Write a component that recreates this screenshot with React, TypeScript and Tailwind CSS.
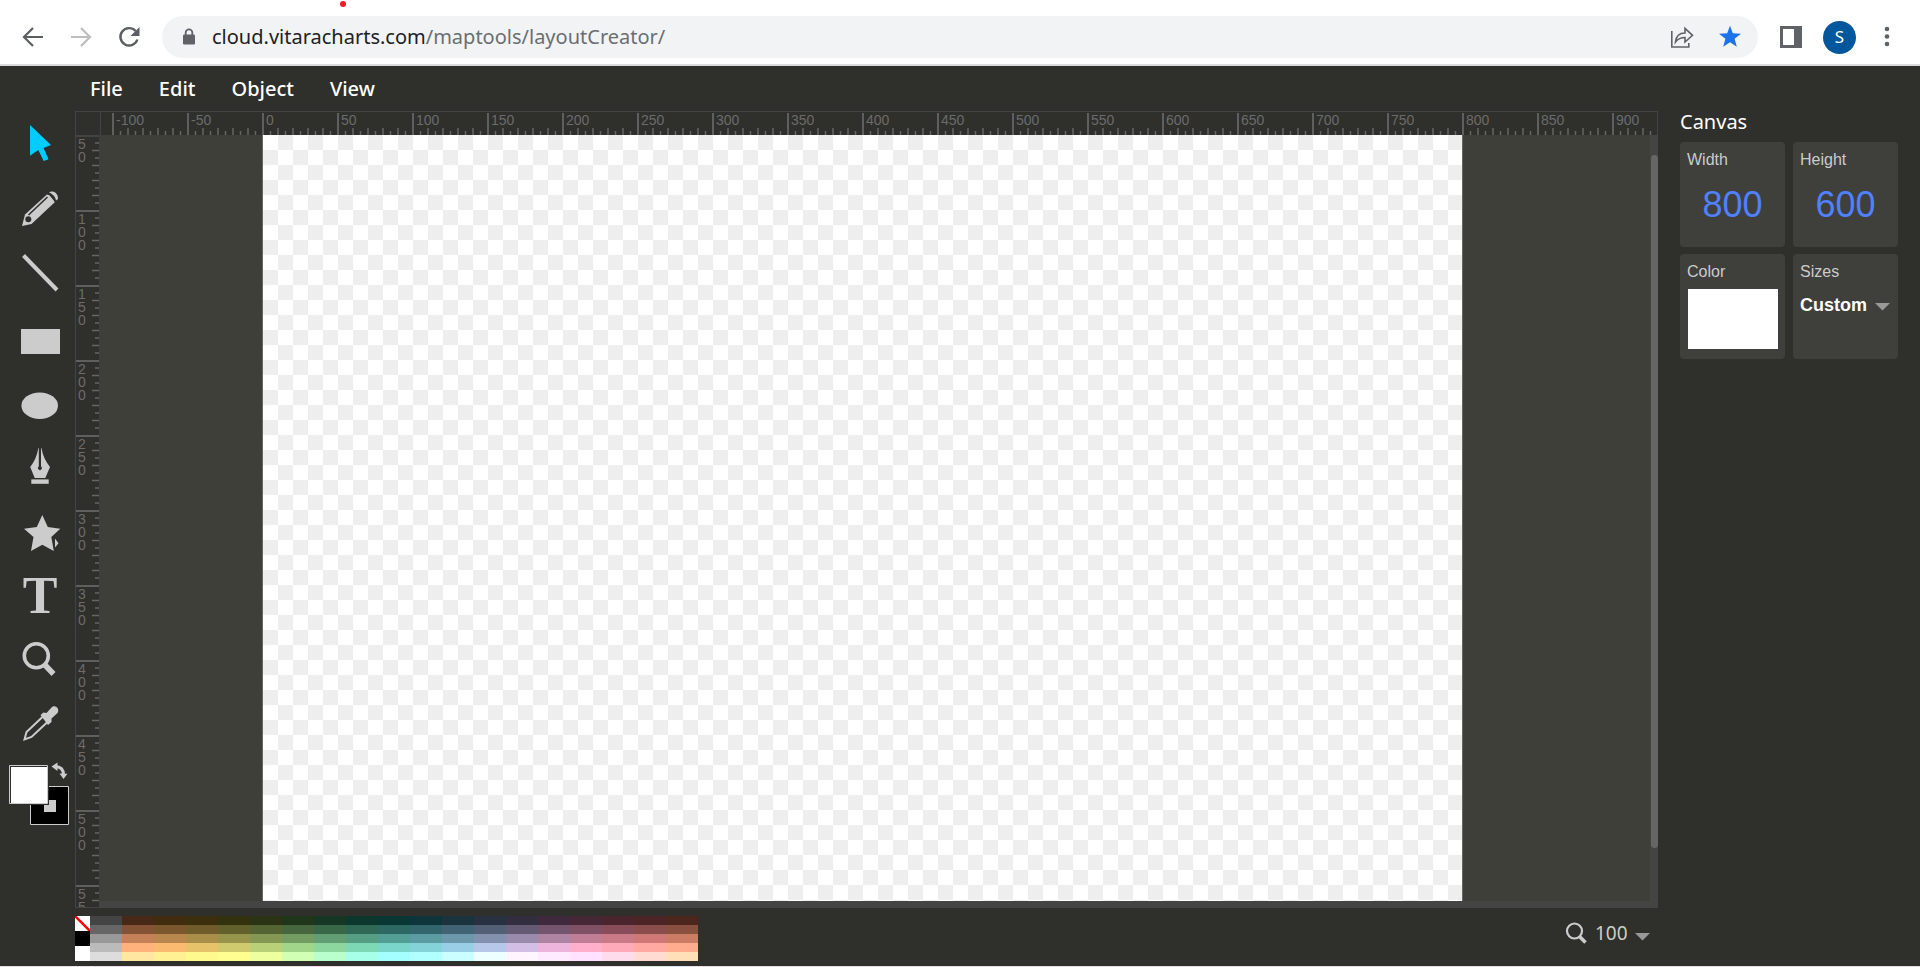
import type { ReactNode } from "react";

const UI_FONT = "font-['Noto_Sans','Open_Sans',sans-serif]";
const LABEL_FONT = "font-['Liberation_Sans',Arial,sans-serif]";

const PALETTE = [
  ["#444444", "#482816", "#422c10", "#3b2f0e", "#32320f", "#2a3414", "#1f361b", "#153723", "#0c372c", "#083734", "#0e353b", "#1a333f", "#273141", "#332d40", "#3e2a3c", "#462735", "#4b252d", "#4d2425", "#4c261d"],
  ["#666666", "#845335", "#7b572d", "#6f5c2a", "#62612c", "#546433", "#46673d", "#396849", "#306856", "#2d6862", "#33666c", "#426373", "#535f75", "#645a73", "#74556d", "#805064", "#884d58", "#8b4d4b", "#894f3f"],
  ["#999999", "#c48157", "#b8874d", "#a98e49", "#97944b", "#849854", "#729c62", "#619e73", "#559e84", "#529d94", "#5b9ba2", "#6d97ab", "#8391ae", "#9a8aab", "#af84a3", "#bf7e96", "#c97a86", "#ce7975", "#cc7c65"],
  ["#bbbbbb", "#ffb27c", "#faba6f", "#e6c36a", "#cfca6d", "#b8d078", "#a0d58a", "#8cd79f", "#7dd8b5", "#7ad6ca", "#84d3d9", "#9acee6", "#b6c7ea", "#d3bee6", "#edb5dc", "#ffaecc", "#ffaab8", "#ffa9a2", "#ffab8d"],
  ["#dddddd", "#ffe7a2", "#fff093", "#fffa8d", "#ffff91", "#eeff9f", "#d1ffb4", "#b9ffce", "#a8ffe9", "#a4ffff", "#b1ffff", "#cbffff", "#edffff", "#fff5ff", "#ffebff", "#ffe2ff", "#ffdcec", "#ffdbd2", "#ffdfb8"],
];

const COLUMN_MARKS = Array.from({ length: 21 }, (_, i) => (i - 2) * 50);
const ROW_MARKS = Array.from({ length: 11 }, (_, i) => (i + 1) * 50);

function BrowserBar() {
  return (
    <header className="flex h-[66px] shrink-0 items-center border-b-2 border-[#dadbdd] bg-white pt-[10px] pr-[21px] pl-[21px]">
      <nav className="flex w-[141px] shrink-0 items-center gap-6 text-[#5b5e63]">
        <button aria-label="Back">
          <svg width="24" height="24" viewBox="0 0 24 24" fill="none" stroke="currentColor" strokeWidth="2.2">
            <path d="M22 12H3.500M12 3 3 12l9 9" />
          </svg>
        </button>
        <button aria-label="Forward" className="text-[#bdbec1]">
          <svg width="24" height="24" viewBox="0 0 24 24" fill="none" stroke="currentColor" strokeWidth="2.2">
            <path d="M2 12h18.500M12 3l9 9-9 9" />
          </svg>
        </button>
        <button aria-label="Reload">
          <svg width="24" height="24" viewBox="0 0 24 24" fill="none" stroke="currentColor" strokeWidth="2.4">
            <path d="M20.4 14.5A8.7 8.7 0 1 1 18.6 6" />
            <path d="M22.5 2v9h-9z" fill="currentColor" stroke="none" />
          </svg>
        </button>
      </nav>
      <div className="flex h-[42px] min-w-0 flex-1 items-center rounded-full bg-[#f1f3f4] pr-4 pl-5">
        <svg width="14" height="18" viewBox="0 0 14 18" className="shrink-0">
          <rect x="1" y="6.5" width="12" height="10" rx="1.3" fill="#5f6368" />
          <path d="M3.7 7V4.6a3.3 3.3 0 0 1 6.6 0V7" fill="none" stroke="#5f6368" strokeWidth="1.8" />
        </svg>
        <a href="#address" className={`ml-4 min-w-0 flex-1 truncate text-[20px] text-[#6b6e72] ${UI_FONT}`}>
          <span className="text-[#202124]">cloud.vitaracharts.com</span>/maptools/layoutCreator/
        </a>
        <button aria-label="Share" className="mr-6">
          <svg width="24" height="24" viewBox="0 0 24 24" fill="none" stroke="#5f6368" strokeWidth="1.6">
            <path d="M1.8 6v16h17v-4" />
            <path d="M5.5 17c.6-6.500 4-9 9.500-9V3.300l7.500 7-7.500 6.700v-4.500c-4.500 0-7 1.200-9.500 4.500z" />
          </svg>
        </button>
        <button aria-label="Bookmark">
          <svg width="24" height="24" viewBox="0 0 24 24" fill="#1a73e8">
            <path d="m12 .7 2.800 7.600 8.200.4-6.400 5.100 2.200 7.900L12 17.200l-6.800 4.500 2.200-7.900L1 8.700l8.200-.4z" />
          </svg>
        </button>
      </div>
      <button aria-label="Side panel" className="ml-[22px]">
        <svg width="22" height="22" viewBox="0 0 22 22">
          <path fill="#5f6368" fillRule="evenodd" d="M0 0h22v22H0zM3 3v16h11V3z" />
        </svg>
      </button>
      <button className={`ml-[21px] h-[33px] w-[33px] rounded-full bg-[#01579b] text-[17px] text-white ${UI_FONT}`}>S</button>
      <button aria-label="More" className="ml-[19px]">
        <svg width="24" height="24" viewBox="0 0 24 24" fill="#5f6368">
          <circle cx="12" cy="4" r="2.300" />
          <circle cx="12" cy="11.500" r="2.300" />
          <circle cx="12" cy="19" r="2.300" />
        </svg>
      </button>
    </header>
  );
}

function Tool({ label, children }: { label: string; children: ReactNode }) {
  return (
    <button aria-label={label} className="block h-16 w-full text-[#cccccc]">
      <svg width="75" height="64" viewBox="0 0 75 64" fill="currentColor">
        {children}
      </svg>
    </button>
  );
}

function Toolbox() {
  return (
    <aside className="flex w-[75px] shrink-0 flex-col pt-px">
      <Tool label="Select">
        <path fill="#00ccff" d="M30 13v30.700l8.300-5.700 5.400 11 4.800-1.700-5-11.300 7.500-3z" />
      </Tool>
      <Tool label="Pencil">
        <path d="M22 50 25 38.500 48 17.500l7 8.500L31.500 48z" />
        <path d="m28.500 39 19-18" stroke="#2f302b" strokeWidth="1.600" fill="none" />
        <circle cx="28.300" cy="43.300" r="3" fill="#2f302b" />
        <path d="M47 17.500c4 .5 8 4 8.500 8.500" stroke="#2f302b" strokeWidth="1.800" fill="none" />
        <path d="M49 16.500c3-2.500 9.500 0 9 6.500l-2 1.500c-.6-4-3.500-6.500-7-8z" />
      </Tool>
      <Tool label="Line">
        <path d="m23.500 15.500 33.500 34.500" stroke="currentColor" strokeWidth="4" />
      </Tool>
      <Tool label="Rectangle">
        <path d="M21 25h39v25H21z" />
      </Tool>
      <Tool label="Ellipse">
        <ellipse cx="39.700" cy="37.700" rx="18.300" ry="13.300" />
      </Tool>
      <Tool label="Path">
        <path d="M38.800 16v18.300a2 2 0 1 0 2.200 0V16h.4c1.500 8 4.600 14 8.600 19l-4.700 11H34.700L30.200 35c4-5 6.700-11 8.200-19z" />
        <path d="M31.300 47.400h17.400v4.400H31.300z" />
      </Tool>
      <Tool label="Shape library">
        <path d="m42.300 19 5.500 12 12.500 1.800-9 8.200 2.500 14-11.500-6.300L31 55l2.500-14-9.500-8.200L36.800 31z" />
        <path d="m55 42.500 3.500 4.700-3.500 4.300z" stroke="#2f302b" strokeWidth="2" paintOrder="stroke" />
      </Tool>
      <button aria-label="Text" className="h-16 w-full pt-2 pl-[5px] text-center font-['Liberation_Serif',serif] text-[52px] leading-[56px] font-bold text-[#cccccc]">
        T
      </button>
      <Tool label="Zoom">
        <circle cx="36.300" cy="31.700" r="12" fill="none" stroke="currentColor" strokeWidth="3.600" />
        <path d="m44.500 40.500 9 9.500" stroke="currentColor" strokeWidth="5.500" />
      </Tool>
      <Tool label="Eyedropper">
        <path d="M43 28.500 26.500 44l-2 7.500 7-2.500L47.500 34" fill="none" stroke="currentColor" strokeWidth="2" />
        <path d="m40.500 27 3-2.500 3 .5 5-5.500c3-3.500 9 1 6 5.500L51.500 30.500v3.500l-3.500 3z" />
      </Tool>
      <div className="h-[74px] w-full">
        <svg width="75" height="74" viewBox="0 0 75 74" role="img" aria-label="Fill and stroke">
          <path d="M30.500 34.500h38v38h-38z" stroke="#cccccc" />
          <path d="M44 48h12v12H44z" fill="#cccccc" />
          <path d="M9 13h40v40H9z" fill="#2f302b" />
          <path d="M9.500 13.500h38v38h-38z" fill="#2f302b" stroke="#cccccc" />
          <path d="M11 15h36v36H11z" fill="#ffffff" />
          <path d="M55 14.500c5.500 0 8.500 3 8.500 8.500" fill="none" stroke="#cccccc" strokeWidth="3" />
          <path d="m51.500 14.500 6-4v8.500zM63.500 27l-4-5.500 8 .2z" fill="#cccccc" />
        </svg>
      </div>
    </aside>
  );
}

function TopRuler() {
  return (
    <div className="flex h-6 border border-b-0 border-[#444444]">
      <div className="w-[25px] shrink-0 border-r border-[#444444]" />
      <div className="flex min-w-0 flex-1 overflow-hidden pt-px pl-[11px]">
        {COLUMN_MARKS.map((mark) => (
          <div key={mark} className={`flex h-[22px] w-[75px] shrink-0 flex-col justify-between text-[14px] leading-[14px] text-[#6b6b6b] ${LABEL_FONT}`}>
            <div className="-mb-[7px] h-[22px] shrink-0 border-l-2 border-[#5f5f5d] pl-[2px]">{mark}</div>
            <svg width="75" height="7" viewBox="0 0 75 7" className="shrink-0" stroke="#666664" strokeWidth="1.500">
              <path d="M8.500 3v4M23.500 3v4M38.500 3v4M53.500 3v4M68.500 3v4M16 0v7M31 0v7M46 0v7M61 0v7" />
            </svg>
          </div>
        ))}
      </div>
    </div>
  );
}

function SideRuler() {
  return (
    <div className="w-6 shrink-0 overflow-hidden border-b border-l border-[#444444]">
      {ROW_MARKS.map((mark) => (
        <div key={mark} className={`flex h-[75px] justify-between border-t-2 pl-[2px] text-[14px] leading-[13px] text-[#6b6b6b] ${mark === 50 ? "border-[#444444]" : "border-[#5f5f5d]"} ${LABEL_FONT}`}>
          <div className="w-2 pt-px break-all">{mark}</div>
          <svg width="8" height="73" viewBox="0 2 8 73" stroke="#666664" strokeWidth="1.500">
            <path d="M4 8h4M4 23h4M4 38h4M4 53h4M4 68h4M1 15.500h7M1 30.500h7M1 45.500h7M1 60.500h7" />
          </svg>
        </div>
      ))}
    </div>
  );
}

function Workspace() {
  return (
    <main className="flex min-w-0 flex-1 flex-col">
      <TopRuler />
      <div className="flex min-h-0 flex-1">
        <SideRuler />
        <div className="flex min-w-0 flex-1 flex-col bg-[#444444]">
          <div className="flex min-h-0 flex-1">
            <div className="min-w-0 flex-1 overflow-hidden bg-[#3f3f3a] pl-[163px]">
              <div className="h-full w-[1201px] border-x border-[#666666] bg-white bg-[conic-gradient(#eeeeee_25%,#ffffff_0_50%,#eeeeee_0_75%,#ffffff_0)] bg-size-[30px_30px]" />
            </div>
            <div className="w-2 pt-5 pb-[53px] pl-px">
              <div className="h-full rounded-full bg-[#666666]" />
            </div>
          </div>
          <div className="h-[7px]" />
        </div>
      </div>
    </main>
  );
}

function Card({ label, htmlFor, children }: { label: string; htmlFor: string; children: ReactNode }) {
  return (
    <div className={`flex h-[105px] w-[105px] flex-col rounded bg-[#3f3f3c] px-[7px] pt-2 ${LABEL_FONT}`}>
      <label htmlFor={htmlFor} className="text-[16px] leading-[19px] text-[#cccccc]">
        {label}
      </label>
      {children}
    </div>
  );
}

function Caret() {
  return (
    <svg width="16" height="8" viewBox="0 0 16 8" className="pointer-events-none shrink-0" fill="#999999">
      <path d="M0 0h15L7.500 7.500z" />
    </svg>
  );
}

function CanvasPanel() {
  const number = "mt-4 w-full bg-transparent text-center text-[36px] leading-[40px] text-[#4f80ff] outline-none";
  return (
    <aside className="w-[262px] shrink-0 pl-[22px]">
      <h2 className={`h-[31px] text-[20px] leading-[22px] text-white ${UI_FONT}`}>Canvas</h2>
      <div className="grid grid-cols-[105px_105px] gap-x-2 gap-y-[7px]">
        <Card label="Width" htmlFor="canvas-width">
          <input id="canvas-width" defaultValue="800" className={number} />
        </Card>
        <Card label="Height" htmlFor="canvas-height">
          <input id="canvas-height" defaultValue="600" className={number} />
        </Card>
        <Card label="Color" htmlFor="canvas-color">
          <button id="canvas-color" aria-label="Canvas color" className="mt-2 h-[60px] w-[90px] self-center bg-white" />
        </Card>
        <Card label="Sizes" htmlFor="canvas-size">
          <div className="mt-3 flex items-center">
            <select id="canvas-size" className="w-[75px] shrink-0 appearance-none bg-transparent text-[18px] leading-6 font-bold text-white outline-none">
              <option>Custom</option>
            </select>
            <div className="pt-1">
              <Caret />
            </div>
          </div>
        </Card>
      </div>
    </aside>
  );
}

function Footer() {
  return (
    <footer className="flex h-[58px] shrink-0 items-start pt-2 pl-[75px]">
      <div className="flex">
        <div className="flex w-[15px] flex-col">
          <button aria-label="No color" className="h-[15px] bg-white">
            <svg width="15" height="15" viewBox="0 0 15 15" className="block">
              <path d="m0 0 15 15" stroke="#ff0000" strokeWidth="2.500" />
            </svg>
          </button>
          <button aria-label="Black" className="h-[15px] bg-black" />
          <button aria-label="White" className="h-[15px] bg-white" />
        </div>
        <div className="grid grid-cols-[repeat(19,32px)]">
          {PALETTE.flat().map((color) => (
            <button key={color} aria-label={color} className="h-[9px]" style={{ backgroundColor: color }} />
          ))}
        </div>
      </div>
      <div className="mr-[269px] ml-auto flex items-center pt-[5px]">
        <svg width="23" height="23" viewBox="0 0 23 23" fill="none" stroke="#cccccc">
          <circle cx="9.500" cy="9" r="7.500" strokeWidth="2.200" />
          <path d="m14.500 14.500 6 6" strokeWidth="3.500" />
        </svg>
        <select aria-label="Zoom level" className={`ml-[7px] w-10 appearance-none bg-transparent text-[19px] leading-6 text-[#cccccc] outline-none ${UI_FONT}`}>
          <option>100</option>
        </select>
        <div className="pt-2">
          <Caret />
        </div>
      </div>
    </footer>
  );
}

export default function App() {
  return (
    <div className="flex h-screen flex-col overflow-hidden border-b border-[#e9dfe6] bg-[#2f302b]">
      <div className="relative">
        <BrowserBar />
        <span className="absolute top-px left-[340px] h-[6px] w-[6px] rounded-full bg-[#ee1c24]" />
      </div>
      <nav className={`flex h-[45px] shrink-0 items-center gap-9 pl-[90px] text-[20px] font-medium text-white ${UI_FONT}`}>
        <button>File</button>
        <button>Edit</button>
        <button>Object</button>
        <button>View</button>
      </nav>
      <div className="flex min-h-0 flex-1">
        <Toolbox />
        <Workspace />
        <CanvasPanel />
      </div>
      <Footer />
    </div>
  );
}
